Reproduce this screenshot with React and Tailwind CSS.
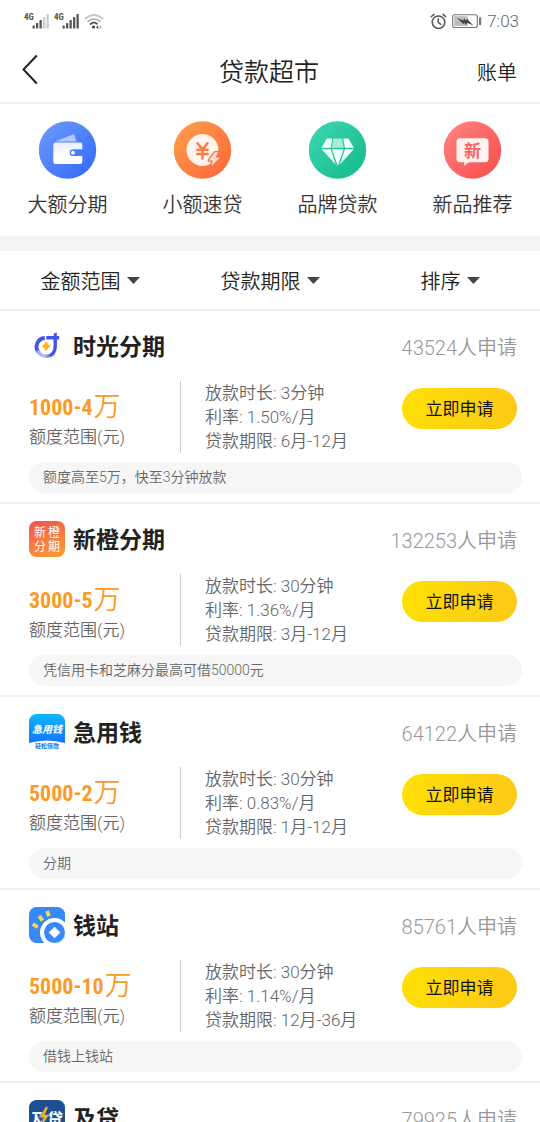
import React, { useState } from 'react';

const SignalIcon = ({ level }) => (
  <svg className="w-[26px] h-5" viewBox="0 0 26 20" aria-hidden="true">
    <text x="0" y="9" fontSize="9" fontWeight="700" fill="#555" fontFamily="Roboto Condensed, Roboto, sans-serif">4G</text>
    {[0, 1, 2, 3, 4].map((i) => (
      <rect key={i} x={8.5 + i * 3.5} y={[14.5, 12, 9, 6, 3][i]} width="2.3" height={[3, 5.5, 8.5, 11.5, 14.5][i]} rx="0.6" fill={i < level ? '#555' : '#ccc'} />
    ))}
  </svg>
);

const WifiIcon = () => (
  <svg className="w-5 h-5" viewBox="0 0 20 20" fill="none" strokeLinecap="round" aria-hidden="true">
    <path d="M1.5 7.5Q10 0.5 18.5 7.5" stroke="#c4c4c4" strokeWidth="1.7" />
    <path d="M4 10.5Q10 5.5 16 10.5" stroke="#b5b5b5" strokeWidth="1.7" />
    <path d="M6.5 13Q10 10.5 13 12.8" stroke="#555" strokeWidth="1.8" />
    <circle cx="9.5" cy="16" r="1.6" fill="#444" />
    <path d="M14.2 14l-2 2.2 2 2.2z" fill="#444" />
    <path d="M15.6 14l2 2.2-2 2.2z" fill="#aaa" />
  </svg>
);

const AlarmIcon = () => (
  <svg className="w-[17px] h-[17px]" viewBox="0 0 17 17" fill="none" stroke="#555" strokeWidth="1.5" strokeLinecap="round" aria-hidden="true">
    <circle cx="8.5" cy="9.2" r="6.3" />
    <path d="M8.2 5.8v3.6l2.6 2M1.2 3.8L4 1.4M15.8 3.8L13 1.4" />
  </svg>
);

const BatteryIcon = () => (
  <svg className="w-[30px] h-[15px]" viewBox="0 0 30 15" fill="none" aria-hidden="true">
    <rect x="0.7" y="0.7" width="24.6" height="12.8" rx="2" stroke="#777" strokeWidth="1.1" />
    <rect x="2.2" y="2.2" width="13.5" height="9.8" fill="#bdbdbd" />
    <path d="M5 4l6.5 2.6.5-2.2 2.4 2.2.8-2.2 2 2.8 4.3 4.3-6.5-2.8-.8 2.2-2.2-2.4-.8 2-2-2.8z" fill="#444" />
    <rect x="27" y="3.2" width="2.2" height="8" rx="1" fill="#777" />
  </svg>
);

const WalletIcon = () => (
  <svg className="w-[58px] h-[58px]" viewBox="0 0 58 58" aria-hidden="true">
    <defs>
      <linearGradient id="wallet-bg" x1="0" y1="0" x2="1" y2="1">
        <stop offset="0" stopColor="#6f9bff" />
        <stop offset="1" stopColor="#2f68f6" />
      </linearGradient>
      <linearGradient id="wallet-fg" x1="0" y1="0" x2="0" y2="1">
        <stop offset="0" stopColor="#e6eeff" />
        <stop offset="0.6" stopColor="#fff" />
      </linearGradient>
    </defs>
    <circle cx="28.5" cy="29" r="28.7" fill="url(#wallet-bg)" />
    <path d="M16.5 20.5L33.500 13.4Q35 13 35.500 14.4L37.500 20.5z" fill="#b4caff" />
    <path d="M16.5 21.5H41Q43.3 21.5 43.3 23.8V28.3H34.1a3.4 3.4 0 0 0 0 6.8H43.3V40.5Q43.3 43 41 43H16.7Q14.3 43 14.3 40.5V24Q14.3 21.5 16.5 21.5z" fill="url(#wallet-fg)" />
    <circle cx="33.9" cy="31.7" r="1.9" fill="#fff" />
  </svg>
);

const YuanIcon = () => (
  <svg className="w-[58px] h-[58px]" viewBox="0 0 58 58" aria-hidden="true">
    <defs>
      <linearGradient id="yuan-bg" x1="0" y1="0" x2="1" y2="1">
        <stop offset="0" stopColor="#ffa04d" />
        <stop offset="1" stopColor="#fb6536" />
      </linearGradient>
    </defs>
    <circle cx="28.5" cy="29" r="28.7" fill="url(#yuan-bg)" />
    <circle cx="28.5" cy="29" r="16" fill="#fff4ee" />
    <path d="M23.5 22.3l5 6.2 5-6.2M28.5 28.5V37.5M23.3 28.8h10.4M23.3 33h10.4" fill="none" stroke="#fc7a3e" strokeWidth="2.5" strokeLinecap="round" />
    <path d="M40.5 31.5L34.8 39.5H38.8L37 45.5L46 36.5H41.8L44 31z" fill="#ffdccb" stroke="#fb7040" strokeWidth="2.6" strokeLinejoin="round" paintOrder="stroke" />
  </svg>
);

const DiamondIcon = () => (
  <svg className="w-[58px] h-[58px]" viewBox="0 0 58 58" aria-hidden="true">
    <defs>
      <linearGradient id="diamond-bg" x1="0" y1="0" x2="1" y2="1">
        <stop offset="0" stopColor="#3fd8b4" />
        <stop offset="1" stopColor="#12b887" />
      </linearGradient>
    </defs>
    <circle cx="28.5" cy="29" r="28.7" fill="url(#diamond-bg)" />
    <path d="M17.7 17.5H23.3L21.8 26.7H12.5z" fill="#effffa" />
    <path d="M24.5 17.5H33L34.7 26.7H22.9z" fill="#a8ecd6" />
    <path d="M34.3 17.5H39.5L44.8 26.7H35.9z" fill="#effffa" />
    <path d="M12.7 28.2H21.7L26.7 43.5z" fill="#effffa" />
    <path d="M23 28.2H34.6L28.8 45z" fill="#effffa" />
    <path d="M35.9 28.2H44.7L30.9 43.5z" fill="#effffa" />
  </svg>
);

const NewIcon = () => (
  <svg className="w-[58px] h-[58px]" viewBox="0 0 58 58" aria-hidden="true">
    <defs>
      <linearGradient id="new-bg" x1="0" y1="0" x2="1" y2="1">
        <stop offset="0" stopColor="#ff8580" />
        <stop offset="1" stopColor="#f84b4b" />
      </linearGradient>
    </defs>
    <circle cx="28.5" cy="29" r="28.7" fill="url(#new-bg)" />
    <path d="M20 39v6L28.5 39z" fill="#ffd0cf" />
    <rect x="12.5" y="17.3" width="32" height="24" rx="3.5" fill="#fff2f1" />
    <text x="28.5" y="35.5" textAnchor="middle" fontSize="17" fontWeight="700" fill="#fa6461" fontFamily="Noto Sans CJK SC, sans-serif">新</text>
  </svg>
);

const ShiguangLogo = () => (
  <svg className="w-9 h-9" viewBox="0 0 36 36" fill="none" aria-hidden="true">
    <defs>
      <linearGradient id="sg-ring" x1="0" y1="1" x2="1" y2="0.3">
        <stop offset="0" stopColor="#8f9efa" />
        <stop offset="0.25" stopColor="#b4bffc" />
        <stop offset="0.55" stopColor="#4352f0" />
      </linearGradient>
    </defs>
    <path d="M15.8 10A8.7 8.7 0 0 0 9.8 24.5" stroke="#4353f0" strokeWidth="3.8" />
    <path d="M8.8 22.5Q11 28.3 18 28.3Q25.8 27.5 26.2 19V11" stroke="url(#sg-ring)" strokeWidth="3.4" />
    <path d="M17.3 8h7.5V5.4l3-1V8H30.2v3.4H17.3z" fill="#4353f0" />
    <path d="M17.2 14Q18.4 17 21.2 18.2Q18.4 19.4 17.2 22.4Q16 19.4 13.2 18.2Q16 17 17.2 14z" fill="#fbb42e" stroke="#fbb42e" />
  </svg>
);

const XinchengLogo = () => (
  <svg className="w-9 h-9" viewBox="0 0 36 36" aria-hidden="true">
    <defs>
      <linearGradient id="xc-bg" x1="0" y1="0" x2="0.4" y2="1">
        <stop offset="0" stopColor="#f0524f" />
        <stop offset="1" stopColor="#fc9436" />
      </linearGradient>
    </defs>
    <rect width="36" height="36" rx="7.5" fill="url(#xc-bg)" />
    <g fill="#fff" fontSize="12" fontWeight="400" fontFamily="Noto Sans CJK SC, sans-serif">
      <text x="5" y="15.5">新</text>
      <text x="19" y="15.5">橙</text>
      <text x="5" y="30">分</text>
      <text x="19" y="30">期</text>
    </g>
  </svg>
);

const JiyongqianLogo = () => (
  <svg className="w-9 h-9" viewBox="0 0 36 36" aria-hidden="true">
    <defs>
      <linearGradient id="jy-bg" x1="0" y1="0" x2="0" y2="1">
        <stop offset="0" stopColor="#12b7ff" />
        <stop offset="1" stopColor="#1473fb" />
      </linearGradient>
    </defs>
    <path d="M7.5 0h21A7.5 7.5 0 0 1 36 7.5V29Q18 24 0 29V7.5A7.5 7.5 0 0 1 7.5 0z" fill="url(#jy-bg)" />
    <text x="18" y="19" textAnchor="middle" fontSize="10" fontWeight="700" fontStyle="italic" fill="#fff" fontFamily="Noto Sans CJK SC, sans-serif">急用钱</text>
    <text x="18" y="34" textAnchor="middle" fontSize="6" fontWeight="700" fill="#1777e6" fontFamily="Noto Sans CJK SC, sans-serif">轻松借款</text>
  </svg>
);

const QianzhanLogo = () => (
  <svg className="w-9 h-9" viewBox="0 0 36 36" aria-hidden="true">
    <defs>
      <clipPath id="qz-clip">
        <rect width="36" height="36" rx="7.5" />
      </clipPath>
    </defs>
    <g clipPath="url(#qz-clip)">
      <rect width="36" height="36" fill="#3788f8" />
      <circle cx="25.5" cy="25.5" r="12.5" fill="none" stroke="#fff" strokeWidth="4" />
      <path d="M25.5 20.2L30.8 25.5L25.5 30.8L20.2 25.5z" fill="#fff" stroke="#fff" strokeLinejoin="round" />
      <g stroke="#f3d84a" strokeWidth="3.8">
        <path d="M3.8 17.2l5 3M10.3 9l3.2 4.6M18 4l2 5.2" />
      </g>
    </g>
  </svg>
);

const JidaiLogo = () => (
  <svg className="w-9 h-9" viewBox="0 0 36 36" aria-hidden="true">
    <rect width="36" height="36" rx="7.5" fill="#1d4f91" />
    <text x="2" y="24.5" fontSize="16" fontWeight="700" fill="#fff" fontFamily="Noto Sans CJK SC, sans-serif">及</text>
    <text x="18" y="24.5" fontSize="16" fontWeight="700" fill="#fff" fontFamily="Noto Sans CJK SC, sans-serif">贷</text>
    <path d="M16.5 6.5L10.5 17.5H14.5L12 27L20.5 14.5H16L19.5 7z" fill="#f6b02c" stroke="#1d4f91" strokeWidth="0.6" />
  </svg>
);

const categories = [
  { name: '大额分期', Icon: WalletIcon },
  { name: '小额速贷', Icon: YuanIcon },
  { name: '品牌贷款', Icon: DiamondIcon },
  { name: '新品推荐', Icon: NewIcon },
];

const filters = [
  { key: 'amount', label: '金额范围' },
  { key: 'term', label: '贷款期限' },
  { key: 'sort', label: '排序' },
];

const loans = [
  { name: '时光分期', Logo: ShiguangLogo, applied: 43524, amount: '1000-4', time: '3分钟', rate: '1.50%/月', term: '6月-12月', hint: '额度高至5万，快至3分钟放款' },
  { name: '新橙分期', Logo: XinchengLogo, applied: 132253, amount: '3000-5', time: '30分钟', rate: '1.36%/月', term: '3月-12月', hint: '凭信用卡和芝麻分最高可借50000元' },
  { name: '急用钱', Logo: JiyongqianLogo, applied: 64122, amount: '5000-2', time: '30分钟', rate: '0.83%/月', term: '1月-12月', hint: '分期' },
  { name: '钱站', Logo: QianzhanLogo, applied: 85761, amount: '5000-10', time: '30分钟', rate: '1.14%/月', term: '12月-36月', hint: '借钱上钱站' },
  { name: '及贷', Logo: JidaiLogo, applied: 79925, amount: '1000-5', time: '30分钟', rate: '0.99%/月', term: '3月-12月', hint: '极速放款' },
];

function LoanCard({ loan }) {
  const { Logo } = loan;
  return (
    <li className="border-b-2 border-[#f0f0f0] pt-[17px] pb-[9px] pl-[29px]">
      <div className="flex items-center pr-[23px]">
        <Logo />
        <h2 className="ml-2 pt-1 text-[23px] leading-8 font-bold text-[#222]">{loan.name}</h2>
        <span className="ml-auto pt-1 text-xl leading-8 text-[#999]">{loan.applied}人申请</span>
      </div>

      <div className="mt-[17px] flex pr-[23px]">
        <div className="w-[151px] pt-2">
          <p className="flex h-9 items-center text-[27px] text-[#fb9a26]">
            <span className="mr-px font-['Roboto_Condensed',sans-serif] text-[22px] font-bold">{loan.amount}</span>万
          </p>
          <p className="text-[17px] leading-6 text-[#666]">额度范围(元)</p>
        </div>
        <div className="flex-1 border-l border-[#ccc] pl-6 text-[17px] leading-6 text-[#666]">
          <p>放款时长: {loan.time}</p>
          <p>利率: {loan.rate}</p>
          <p>贷款期限: {loan.term}</p>
        </div>
        <button className="mt-[7px] h-[41px] w-[115px] rounded-full bg-linear-to-r from-[#fde004] to-[#fdc916] pt-[2px] text-[17px] font-normal text-[#111]">立即申请</button>
      </div>

      <p className="mt-[9px] mr-[18px] h-[31px] rounded-full bg-[#f6f6f6] px-[14px] text-sm leading-[30px] text-[#666]">{loan.hint}</p>
    </li>
  );
}

export default function App() {
  const [values, setValues] = useState({ amount: '', term: '', sort: '' });

  return (
    <div className="flex h-screen flex-col overflow-hidden bg-white font-['Roboto','Noto_Sans_CJK_SC',sans-serif] font-[350] text-[#222]">
      <div className="flex h-[42px] shrink-0 items-center justify-between pr-[21px] pl-6 text-[#666]">
        <div className="flex items-center gap-1">
          <SignalIcon level={3} />
          <SignalIcon level={5} />
          <WifiIcon />
        </div>
        <div className="flex items-center gap-[5px]">
          <AlarmIcon />
          <BatteryIcon />
          <span className="pt-[2px] text-[17px]">7:03</span>
        </div>
      </div>

      <header className="grid h-[62px] shrink-0 grid-cols-3 items-center border-b-2 border-[#f0f0f0] pr-[23px] pl-[21px]">
        <button aria-label="返回" className="justify-self-start pb-1">
          <svg className="h-8 w-[18px]" viewBox="0 0 18 32" fill="none" stroke="#222" strokeWidth="2">
            <path d="M15.8 1.5L2.5 15.5L15.8 29.5" />
          </svg>
        </button>
        <h1 className="justify-self-center pt-[2px] text-[25px] font-[350]">贷款超市</h1>
        <a href="#bills" className="justify-self-end pt-[2px] text-xl">账单</a>
      </header>

      <nav className="grid h-[132px] shrink-0 grid-cols-4 pt-[17px]">
        {categories.map(({ name, Icon }) => (
          <a key={name} href="#category" className="flex flex-col items-center gap-3 text-xl text-[#333]">
            <Icon />
            {name}
          </a>
        ))}
      </nav>

      <div className="h-[15px] shrink-0 bg-[#f5f5f5]" />

      <div className="grid h-[60px] shrink-0 grid-cols-3 items-center border-b-2 border-[#f0f0f0]">
        {filters.map((f) => (
          <div key={f.key} className="flex items-center justify-center">
            <select
              aria-label={f.label}
              value={values[f.key]}
              onChange={(e) => setValues({ ...values, [f.key]: e.target.value })}
              className="appearance-none field-sizing-content bg-transparent pt-1 pr-[19px] text-xl font-[350] text-[#222]"
            >
              <option value="">{f.label}</option>
            </select>
            <svg className="pointer-events-none -ml-[13px] h-[7px] w-[13px]" viewBox="0 0 13 7" aria-hidden="true">
              <path d="M0 0h13L6.5 7z" fill="#444" />
            </svg>
          </div>
        ))}
      </div>

      <ul className="min-h-0 flex-1 overflow-y-auto [scrollbar-width:none]">
        {loans.map((loan) => (
          <LoanCard key={loan.name} loan={loan} />
        ))}
      </ul>
    </div>
  );
}
